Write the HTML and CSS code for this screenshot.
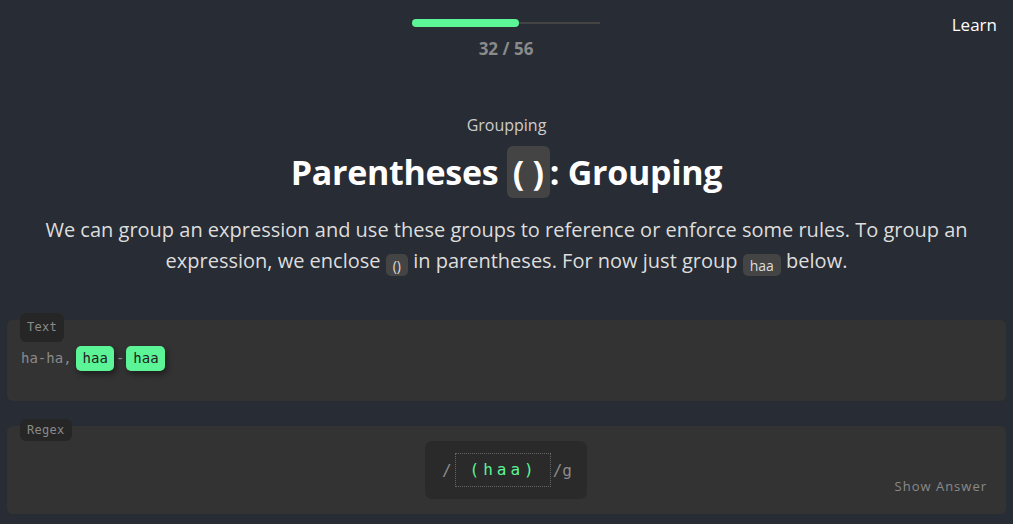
FILE: index.html
```html
<!DOCTYPE html>
<html>
<head>
<meta charset="utf-8">
<link rel="stylesheet" href="styles.css">
</head>
<body>
<header class="top">
  <div class="progress">
    <div class="track"><div class="fill" style="width:57%"></div></div>
    <div class="count">32 / 56</div>
  </div>
  <a class="learn">Learn</a>
</header>
<main class="lesson">
  <div class="sub">Groupping</div>
  <h1 class="title">Parentheses <code class="big-code">( )</code>: Grouping</h1>
  <p class="desc">We can group an expression and use these groups to reference or enforce some rules. To group an expression, we enclose <code class="chip">()</code> in parentheses. For now just group <code class="chip">haa</code> below.</p>
</main>
<section class="block text-block">
  <span class="label label-text">Text</span>
  <div class="sample">ha-ha,<mark class="match first">haa</mark>-<mark class="match">haa</mark></div>
</section>
<section class="block regex-block">
  <span class="label label-regex">Regex</span>
  <div class="regex-wrap">
    <div class="regex-box">
      <span class="slash">/</span>
      <span class="input">(haa)</span>
      <span class="slash flags">/g</span>
    </div>
  </div>
  <span class="answer">Show Answer</span>
</section>
</body>
</html>
```
FILE: styles.css
```css
html, body {
  margin: 0;
  padding: 0;
}
body {
  background: #282c34;
  font-family: "Open Sans", "Noto Sans", sans-serif;
  color: #fff;
  width: 1013px;
  height: 524px;
  overflow: hidden;
}
.top {
  position: relative;
  display: flex;
  justify-content: center;
  padding-top: 20px;
  height: 45px;
}
.progress {
  display: flex;
  flex-direction: column;
  align-items: center;
  width: 188px;
  margin-left: -1px;
}
.track {
  width: 188px;
  height: 2px;
  background: #444;
  margin-top: 2px;
  position: relative;
}
.fill {
  position: absolute;
  left: 0;
  top: -3px;
  height: 8px;
  background: #5bf597;
  border-radius: 4px;
}
.count {
  margin-top: 15px;
  font-size: 17px;
  font-weight: 700;
  color: #8a8a8a;
  line-height: 20px;
}
.learn {
  position: absolute;
  right: 16px;
  top: 13px;
  font-size: 17px;
  color: #fff;
  line-height: 24px;
}
.lesson {
  text-align: center;
  padding: 0 30px;
}
.sub {
  margin-top: 48px;
  font-size: 16px;
  color: #ccc;
  line-height: 24px;
}
.title {
  margin: 9px 0 0;
  font-size: 34px;
  font-weight: 700;
  line-height: 52px;
  letter-spacing: -0.3px;
}
.big-code {
  display: inline-block;
  background: #444;
  border-radius: 6px;
  font-family: "Open Sans", sans-serif;
  padding: 0 6px;
  line-height: 52px;
  vertical-align: top;
}
.desc {
  margin: 16px 0 0;
  font-size: 20px;
  line-height: 31px;
  color: #ddd;
}
.chip {
  display: inline-block;
  background: #444;
  border-radius: 5px;
  font-family: "Open Sans", sans-serif;
  font-size: 14px;
  line-height: 19px;
  padding: 2px 7px 1px;
  color: #ddd;
  vertical-align: -3px;
}
.block {
  position: relative;
  margin: 0 7px;
  background: #333;
  border-radius: 6px;
}
.text-block {
  margin-top: 44px;
  height: 81px;
}
.regex-block {
  margin-top: 25px;
  height: 88px;
}
.label {
  position: absolute;
  left: 13px;
  background: #262626;
  border-radius: 6px;
  font-family: "DejaVu Sans Mono", monospace;
  font-size: 12px;
  color: #8a8a8a;
  padding: 0 7px;
  letter-spacing: 0.3px;
}
.label-text {
  top: -7px;
  line-height: 29px;
}
.label-regex {
  top: -7px;
  line-height: 22px;
}
.sample {
  padding: 26px 0 0 14px;
  font-family: "DejaVu Sans Mono", monospace;
  font-size: 14px;
  color: #8a8a8a;
  line-height: 25px;
}
.match {
  display: inline-block;
  background: #5bf597;
  color: #222;
  border-radius: 5px;
  padding: 0 6px 0 7px;
  margin: 0 2px;
  box-shadow: 2px 3px 6px rgba(0,0,0,0.45);
}
.match.first {
  margin-left: 4px;
}
.regex-wrap {
  display: flex;
  justify-content: center;
  padding-top: 15px;
}
.regex-box {
  display: flex;
  align-items: center;
  background: #2a2a2a;
  border-radius: 7px;
  width: 162px;
  height: 58px;
  box-sizing: border-box;
  padding-left: 17px;
  margin-left: -1px;
  font-family: "DejaVu Sans Mono", monospace;
}
.slash {
  color: #8a8a8a;
  font-size: 16px;
}
.input {
  margin-left: 3px;
  width: 96px;
  height: 34px;
  box-sizing: border-box;
  border: 1px dotted #666;
  color: #5bf597;
  font-size: 16px;
  letter-spacing: 4px;
  line-height: 32px;
  text-align: center;
  padding-left: 2px;
}
.flags {
  margin-left: 2px;
}
.answer {
  position: absolute;
  right: 19px;
  bottom: 19px;
  font-size: 13px;
  color: #8a8a8a;
  letter-spacing: 1px;
}
```
